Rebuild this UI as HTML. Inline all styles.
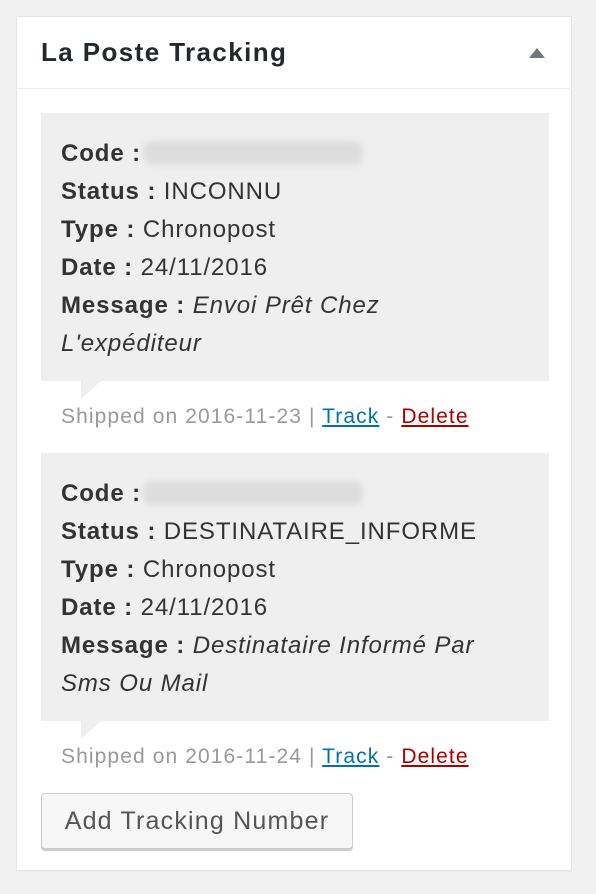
<!DOCTYPE html>
<html><head><style>
body{margin:0;background:#f1f1f1;width:596px;height:894px;position:relative;font-family:"Liberation Sans",sans-serif;color:#32373c;}
.panel{position:absolute;left:16px;top:16px;width:554px;height:853px;background:#fff;border:1px solid #e5e5e5;box-shadow:0 1px 1px rgba(0,0,0,.04);}
.hd{position:absolute;left:0;top:0;width:554px;height:71px;border-bottom:1px solid #eee;}
.hd h2{margin:0;position:absolute;left:24px;top:20px;font-size:26px;letter-spacing:1.4px;font-weight:bold;color:#23282d;}
.tri{position:absolute;left:512px;top:31px;width:0;height:0;border-left:8px solid transparent;border-right:8px solid transparent;border-bottom:10px solid #72777c;}
.note{position:absolute;left:24px;width:508px;height:268px;background:#efefef;}
.note .c{position:absolute;left:20px;top:22px;font-size:24px;letter-spacing:0.9px;line-height:38px;color:#333;white-space:nowrap;}
.note b{color:#333}
.ptr{position:absolute;left:40px;top:268px;width:0;height:0;border-top:18px solid #efefef;border-right:20px solid transparent;}
.blur{display:inline-block;width:220px;height:24px;vertical-align:-4px;background:#ddd;border-radius:10px;filter:blur(3px);margin-left:2px}
.meta{position:absolute;left:44px;font-size:21px;letter-spacing:1.1px;color:#999;}
.meta a{text-decoration:underline}
.tr{color:#0073aa}.dl{color:#a00}
.btn{position:absolute;left:24px;top:776px;width:310px;height:54px;border:1px solid #ccc;border-radius:4px;background:#f7f7f7;box-shadow:0 2px 0 #ccc;font-size:25px;letter-spacing:1.2px;color:#555;line-height:54px;text-align:center;}
</style></head><body>
<div class="panel">
<div class="hd"><h2>La Poste Tracking</h2><div class="tri"></div></div>
<div class="note" style="top:96px"><div class="c"><b>Code :</b><span class="blur"></span><br><b>Status :</b> INCONNU<br><b>Type :</b> Chronopost<br><b>Date :</b> 24/11/2016<br><b>Message :</b> <i>Envoi Prêt Chez<br>L'expéditeur</i></div><div class="ptr"></div></div>
<div class="meta" style="top:388px">Shipped on 2016-11-23 | <a class="tr">Track</a> - <a class="dl">Delete</a></div>
<div class="note" style="top:436px"><div class="c"><b>Code :</b><span class="blur"></span><br><b>Status :</b> DESTINATAIRE_INFORME<br><b>Type :</b> Chronopost<br><b>Date :</b> 24/11/2016<br><b>Message :</b> <i>Destinataire Informé Par<br>Sms Ou Mail</i></div><div class="ptr"></div></div>
<div class="meta" style="top:728px">Shipped on 2016-11-24 | <a class="tr">Track</a> - <a class="dl">Delete</a></div>
<div class="btn">Add Tracking Number</div>
</div>
</body></html>
